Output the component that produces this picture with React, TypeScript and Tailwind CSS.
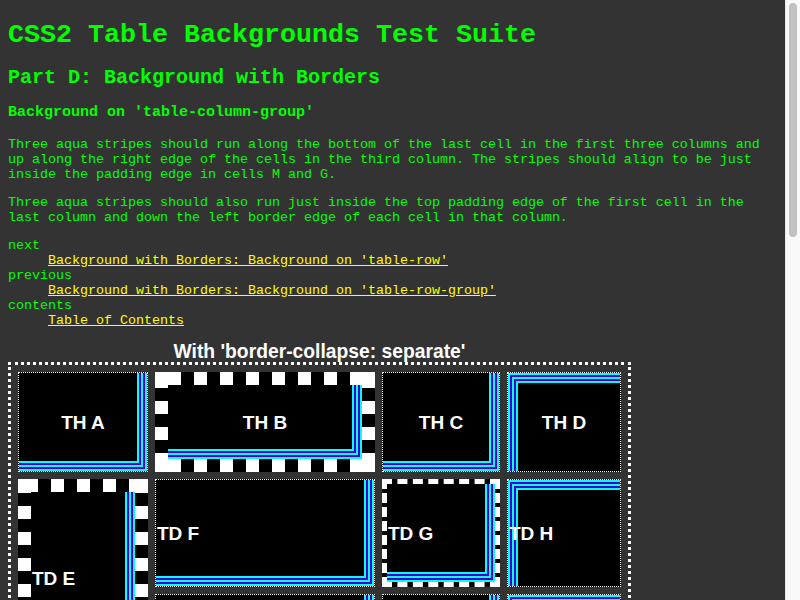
const dotted = "border border-dotted border-white bg-black";

// aqua stripes painted as stacked inset shadows (bottom-right L and top-left L)
const stripesBR =
  "shadow-[inset_-2px_-2px_0_#00ffff,inset_-4px_-4px_0_#5000c8,inset_-6px_-6px_0_#00ffff,inset_-8px_-8px_0_#5000c8,inset_-10px_-10px_0_#00ffff]";
const stripesTL =
  "shadow-[inset_2px_2px_0_#00ffff,inset_4px_4px_0_#5000c8,inset_6px_6px_0_#00ffff,inset_8px_8px_0_#5000c8,inset_10px_10px_0_#00ffff]";

// square-dash 13px border, drawn as background layers under a transparent border
const checkerB =
  "border-[13px] border-transparent [background:linear-gradient(#fff,#fff)_0_0/13px_13px_no-repeat_border-box,linear-gradient(#fff,#fff)_100%_0/13px_13px_no-repeat_border-box,linear-gradient(#fff,#fff)_0_100%/13px_13px_no-repeat_border-box,linear-gradient(#fff,#fff)_100%_100%/13px_13px_no-repeat_border-box,repeating-linear-gradient(90deg,#000_0_13px,#fff_13px_26px)_0_0/100%_13px_no-repeat_border-box,repeating-linear-gradient(90deg,#000_0_13px,#fff_13px_26px)_0_100%/100%_13px_no-repeat_border-box,repeating-linear-gradient(180deg,#fff_0_13px,#000_13px_26px)_0_3px/13px_100%_no-repeat_border-box,repeating-linear-gradient(180deg,#fff_0_13px,#000_13px_26px)_100%_3px/13px_100%_no-repeat_border-box,#000]";
const checkerE =
  "border-[13px] border-transparent [background:linear-gradient(#fff,#fff)_0_0/13px_13px_no-repeat_border-box,linear-gradient(#fff,#fff)_100%_0/13px_13px_no-repeat_border-box,linear-gradient(#fff,#fff)_0_100%/13px_13px_no-repeat_border-box,linear-gradient(#fff,#fff)_100%_100%/13px_13px_no-repeat_border-box,repeating-linear-gradient(90deg,#000_0_13px,#fff_13px_26px)_-6px_0/100%_13px_no-repeat_border-box,repeating-linear-gradient(90deg,#000_0_13px,#fff_13px_26px)_-6px_100%/100%_13px_no-repeat_border-box,repeating-linear-gradient(180deg,#fff_0_13px,#000_13px_26px)_0_1px/13px_100%_no-repeat_border-box,repeating-linear-gradient(180deg,#fff_0_13px,#000_13px_26px)_100%_1px/13px_100%_no-repeat_border-box,#000]";

const dashed = "border-[5px] border-dashed border-white bg-black";

interface CellProps {
  label: string;
  head?: boolean;
  className: string;
}

function Cell({ label, head, className }: CellProps) {
  return (
    <div
      className={`flex items-center font-['Liberation_Sans',Arial,sans-serif] text-[19px] font-bold text-white ${
        head ? "justify-center" : "justify-start pl-px"
      } ${className}`}
    >
      {label}
    </div>
  );
}

const links = [
  { term: "next", text: "Background with Borders: Background on 'table-row'" },
  { term: "previous", text: "Background with Borders: Background on 'table-row-group'" },
  { term: "contents", text: "Table of Contents" },
];

export default function App() {
  return (
    <div className="flex h-[600px] overflow-hidden bg-[#333333]">
      <main className="w-[785px] shrink-0 px-2 pt-[20px] font-['Liberation_Mono','Courier_New',monospace] text-[13.33px] leading-[15px] text-[#00ff00]">
        <h1 className="text-[26.67px] font-bold leading-[30px]">CSS2 Table Backgrounds Test Suite</h1>
        <h2 className="mt-[16px] text-[20px] font-bold leading-[23px]">Part D: Background with Borders</h2>
        <h3 className="mt-[15px] text-[15px] font-bold leading-[17px]">
          Background on 'table-column-group'
        </h3>

        <p className="mt-[16px]">
          Three aqua stripes should run along the bottom of the last cell in the first three columns and
          up along the right edge of the cells in the third column. The stripes should align to be just
          inside the padding edge in cells M and G.
        </p>
        <p className="mt-[13px]">
          Three aqua stripes should also run just inside the top padding edge of the first cell in the
          last column and down the left border edge of each cell in that column.
        </p>

        <dl className="mt-[13px]">
          {links.map((l) => (
            <div key={l.term}>
              <dt>{l.term}</dt>
              <dd className="pl-10">
                <a href="#" className="text-[#ffff00] underline">
                  {l.text}
                </a>
              </dd>
            </div>
          ))}
        </dl>

        <div className="mt-[14px] w-fit">
          <div className="h-[20px] text-center font-['Liberation_Sans',Arial,sans-serif] text-[19.3px] font-bold leading-[20px] text-white">
            With 'border-collapse: separate'
          </div>
          <div className="grid grid-cols-[130px_220px_118px_114px] grid-rows-[100px_108px_83px] gap-[7px] border-[3px] border-dotted border-white p-[7px]">
            <Cell head label="TH A" className={`${dotted} ${stripesBR}`} />
            <Cell head label="TH B" className={`${checkerB} ${stripesBR}`} />
            <Cell head label="TH C" className={`${dotted} ${stripesBR}`} />
            <Cell head label="TH D" className={`${dotted} ${stripesTL}`} />

            <Cell label="TD E" className={`row-span-2 ${checkerE} ${stripesBR}`} />
            <Cell label="TD F" className={`${dotted} ${stripesBR}`} />
            <Cell label="TD G" className={`${dashed} ${stripesBR}`} />
            <Cell label="TD H" className={`${dotted} ${stripesTL}`} />

            <Cell label="" className={`${dotted} ${stripesBR}`} />
            <Cell label="" className={`${dotted} ${stripesBR}`} />
            <Cell label="" className={`${dotted} ${stripesTL}`} />
          </div>
        </div>
      </main>

      {/* window scrollbar */}
      <aside className="flex w-[15px] shrink-0 justify-center border-l border-[#e8e8e8] bg-[#f9f9f9] pt-[3px]">
        <div className="h-[234px] w-[8px] rounded-[4px] bg-[#c1c1c1]" />
      </aside>
    </div>
  );
}
